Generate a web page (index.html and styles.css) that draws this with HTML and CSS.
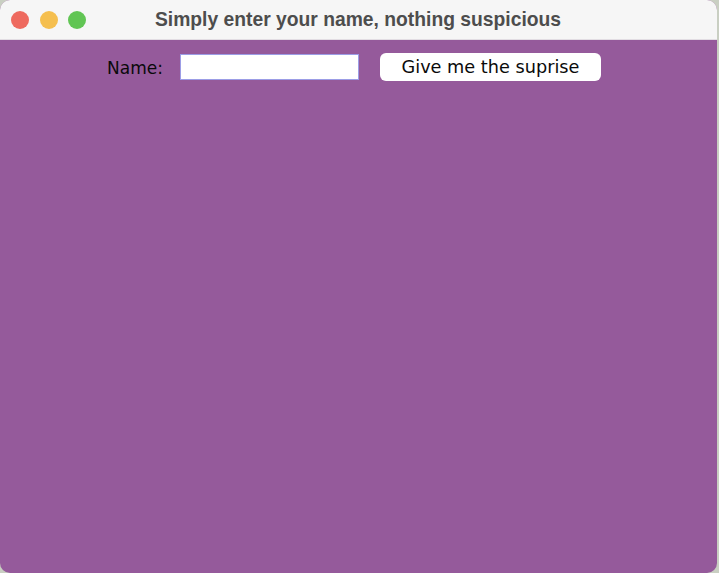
FILE: index.html
```html
<!DOCTYPE html>
<html>
<head>
<meta charset="utf-8">
<title>Simply enter your name, nothing suspicious</title>
<link rel="stylesheet" href="styles.css">
</head>
<body>
<div class="window">
  <div class="titlebar">
    <div class="lights">
      <span class="light red"></span>
      <span class="light yellow"></span>
      <span class="light green"></span>
    </div>
    <div class="title">Simply enter your name, nothing suspicious</div>
  </div>
  <div class="content">
    <div class="row">
      <label class="label" for="name">Name:</label>
      <input class="field" id="name" type="text">
      <button class="btn">Give me the suprise</button>
    </div>
  </div>
</div>
</body>
</html>
```

FILE: styles.css
```css
html, body {
  margin: 0;
  padding: 0;
}
body {
  width: 719px;
  height: 573px;
  overflow: hidden;
  background: #c9cfc2;
}
.window {
  width: 717px;
  height: 573px;
  border-radius: 10px;
  overflow: hidden;
  display: flex;
  flex-direction: column;
  background: #955a9b;
}
.titlebar {
  height: 40px;
  flex: 0 0 40px;
  background: #f6f6f6;
  position: relative;
  display: flex;
  align-items: center;
  justify-content: center;
  box-sizing: border-box;
  border-bottom: 1px solid #e2dde3;
}
.lights {
  position: absolute;
  left: 11px;
  top: 11px;
  display: flex;
  gap: 10.5px;
}
.light {
  width: 18px;
  height: 18px;
  border-radius: 50%;
  display: block;
}
.red { background: #ee6a5f; }
.yellow { background: #f5bf4f; }
.green { background: #61c554; }
.title {
  font-family: "Liberation Sans", Arial, sans-serif;
  font-weight: bold;
  font-size: 19.3px;
  color: #4d4d4d;
  margin-left: -1px;
}
.content {
  flex: 1;
}
.row {
  display: flex;
  align-items: center;
  padding-left: 107px;
  padding-top: 13px;
}
.label {
  font-family: "DejaVu Sans", sans-serif;
  font-size: 17px;
  color: #0a0a0a;
  width: 73px;
  padding-top: 2px;
}
.field {
  width: 179px;
  height: 26px;
  box-sizing: border-box;
  margin: 0;
  border: 1px solid #9c9de6;
  background: #fff;
  outline: none;
  padding: 0 4px;
}
.btn {
  margin: 0 0 0 21px;
  width: 221px;
  height: 28px;
  box-sizing: border-box;
  border: none;
  border-radius: 6px;
  background: #fff;
  font-family: "DejaVu Sans", sans-serif;
  font-size: 17.7px;
  color: #0a0a0a;
  padding: 0;
}
```
